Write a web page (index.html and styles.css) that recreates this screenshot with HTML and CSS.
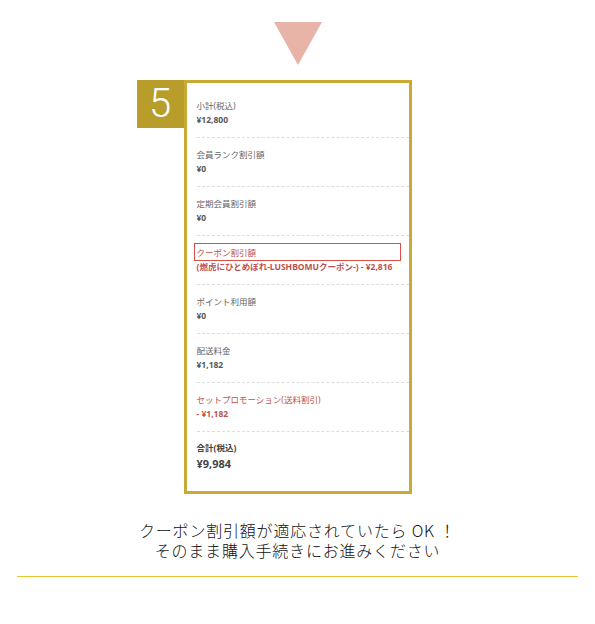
FILE: index.html
```html
<!DOCTYPE html>
<html lang="ja">
<head>
  <meta charset="UTF-8" />
  <title>クーポン割引額の確認</title>
  <link rel="stylesheet" href="styles.css">
</head>
<body>

  <div class="arrow"></div>

  <div class="summary">
    <div class="step">5</div>

    <div class="item">
      <div class="label">小計(税込)</div>
      <div class="value">¥12,800</div>
    </div>
    <div class="item">
      <div class="label">会員ランク割引額</div>
      <div class="value">¥0</div>
    </div>
    <div class="item">
      <div class="label">定期会員割引額</div>
      <div class="value">¥0</div>
    </div>
    <div class="item red">
      <div class="label hl">クーポン割引額</div>
      <div class="value">(燃虎にひとめぼれ-LUSHBOMUクーポン-) - ¥2,816</div>
    </div>
    <div class="item">
      <div class="label">ポイント利用額</div>
      <div class="value">¥0</div>
    </div>
    <div class="item">
      <div class="label">配送料金</div>
      <div class="value">¥1,182</div>
    </div>
    <div class="item red">
      <div class="label">セットプロモーション(送料割引)</div>
      <div class="value">- ¥1,182</div>
    </div>
    <div class="item total">
      <div class="label">合計(税込)</div>
      <div class="value">¥9,984</div>
    </div>
  </div>

  <div class="note">
    <p>クーポン割引額が適応されていたら OK ！</p>
    <p>そのまま購入手続きにお進みください</p>
  </div>

  <div class="rule"></div>

</body>
</html>
```

FILE: styles.css
```css
body {
  margin: 0;
  padding: 0;
  background: #fff;
  font-family: "Noto Sans", "Noto Sans CJK JP", sans-serif;
  color: #333;
}

.arrow {
  width: 0;
  height: 0;
  margin: 22px auto 0;
  border-left: 24.5px solid transparent;
  border-right: 24.5px solid transparent;
  border-top: 43px solid #e8b4a7;
}

.summary {
  position: relative;
  width: 212px;
  margin: 15px auto 0;
  padding: 6px 0 18px 10px;
  border: 3px solid #c8aa35;
}

.step {
  position: absolute;
  left: -50px;
  top: -3px;
  width: 47px;
  height: 48px;
  background: #b99d2b;
  color: #fff;
  font-family: Roboto, "Open Sans", sans-serif;
  font-weight: 300;
  font-size: 40px;
  line-height: 48px;
  text-align: center;
}

.item {
  padding: 10px 0;
  border-bottom: 1px dashed #ddd;
}

.item .label {
  font-size: 8.5px;
  line-height: 14px;
  color: #666;
}

.item .value {
  font-size: 8.5px;
  line-height: 14px;
  font-weight: bold;
  color: #585858;
  white-space: nowrap;
}

.item.red .label,
.item.red .value {
  color: #bd524c;
}

.label.hl {
  margin: -3px 8px -1px -3px;
  padding: 2px 2px 0;
  border: 1px solid #dc4f45;
}

.item.total {
  border-bottom: none;
  padding: 9px 0 0;
}

.item.total .label {
  font-weight: bold;
  color: #444;
}

.item.total .value {
  font-size: 11px;
  line-height: 18px;
  color: #444;
}

.note {
  margin-top: 26px;
  font-family: "Noto Sans CJK JP", sans-serif;
  font-weight: 300;
  font-size: 16px;
  letter-spacing: 0.8px;
  text-align: center;
  color: #111;
}

.note p {
  margin: 0;
  height: 20px;
  line-height: 20px;
}

.rule {
  margin: 16px 17px 0;
  border-top: 1px solid #e4c335;
}
```
